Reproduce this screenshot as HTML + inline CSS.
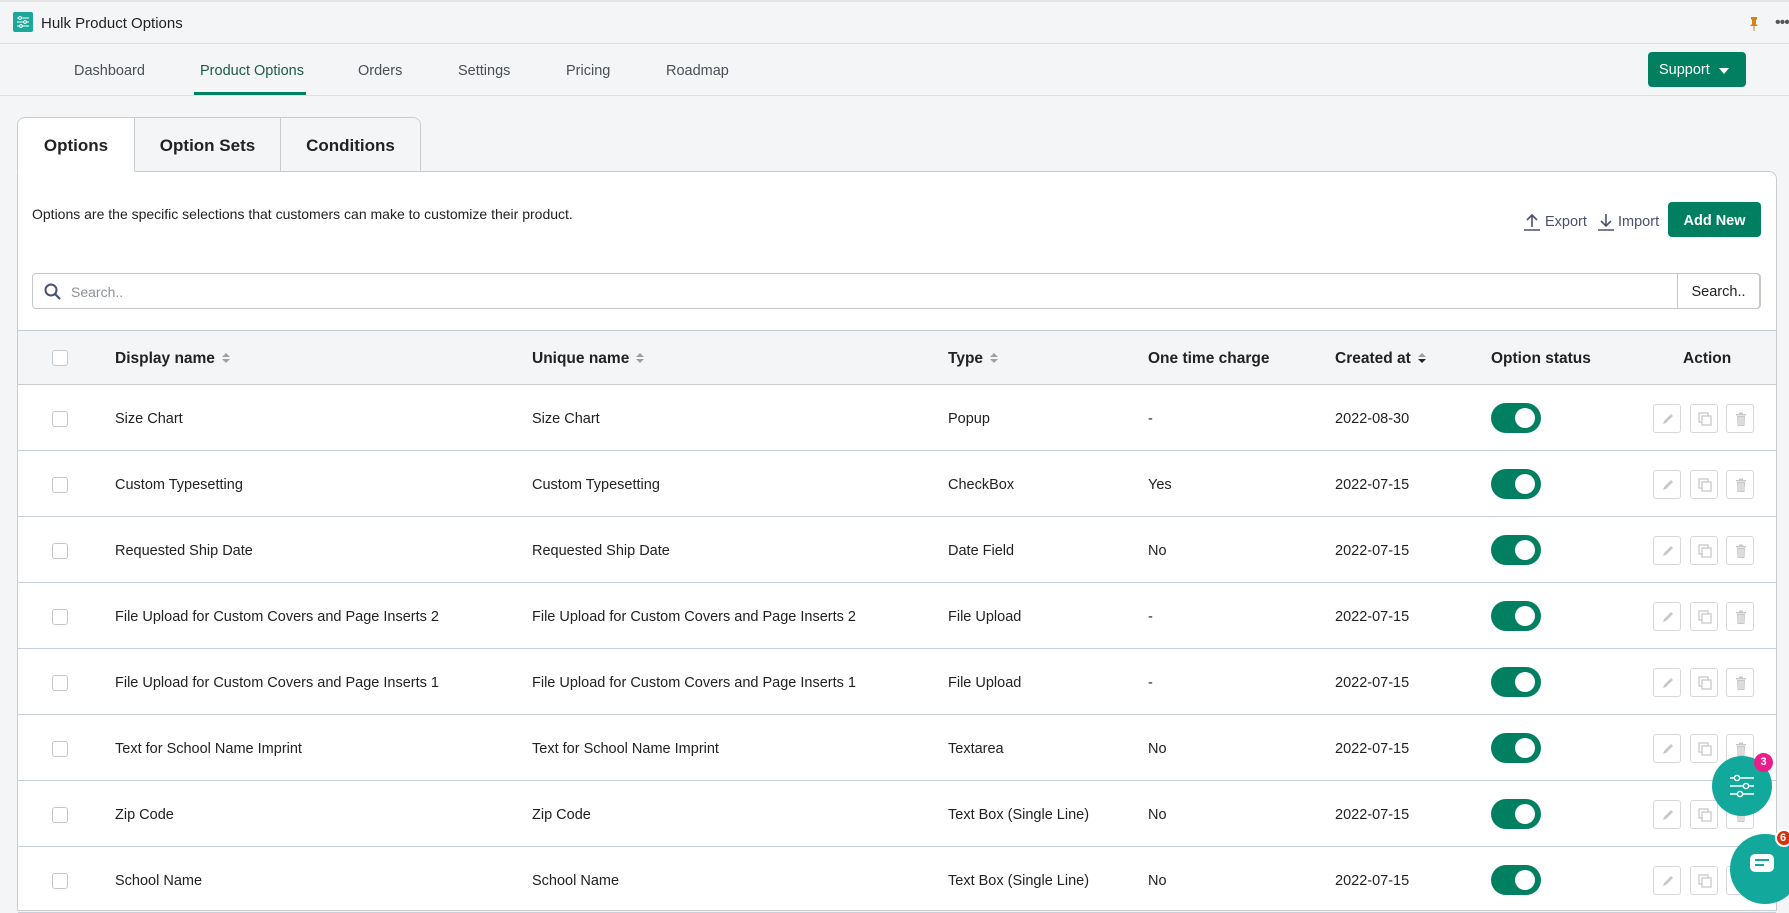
<!DOCTYPE html>
<html><head><meta charset="utf-8"><style>
*{box-sizing:border-box;margin:0;padding:0}
body{width:1789px;height:892px;overflow:hidden;background:#f4f5f7;font-family:"Liberation Sans",sans-serif;color:#202223;position:relative}
.top{position:absolute;left:0;top:0;width:1789px;height:44px;border-bottom:1px solid #dcdee1;border-top:2px solid #e3e3e3}
.logo{position:absolute;left:13px;top:10px;width:20px;height:20px;background:#1aa89c;border-radius:2px}
.title{position:absolute;left:41px;top:13px;font-size:15px;color:#202223}
.nav{position:absolute;left:0;top:44px;width:1789px;height:52px;border-bottom:1px solid #dcdee1}
.nav span{position:absolute;top:19px;font-size:14.5px;color:#4a4f55}
.nav .act{color:#1d5a49}
.ul{position:absolute;left:194px;top:48px;width:112px;height:3px;background:#008060}
.sup{position:absolute;left:1648px;top:52px;width:98px;height:35px;background:#008060;border-radius:4px;color:#fff;font-size:14.5px;line-height:37px;padding-left:11px}
.sup:after{content:"";position:absolute;right:17px;top:16px;border:5px solid transparent;border-top:6px solid #fff;border-bottom:0}
.tab{position:absolute;top:117px;height:55px;background:#f4f5f7;border:1px solid #c9cccf;font-weight:bold;font-size:17px;text-align:center;line-height:56px;color:#202223}
.card{position:absolute;left:17px;top:171px;width:1760px;height:740px;background:#fff;border:1px solid #c9cccf;border-radius:0 8px 0 0}
.desc{position:absolute;left:32px;top:206px;font-size:14px;color:#202223}
.lnk{position:absolute;top:214px;font-size:14.5px;color:#4a5070}
.add{position:absolute;left:1668px;top:202px;width:93px;height:35px;background:#008060;border-radius:4px;color:#fff;font-weight:bold;font-size:14.5px;text-align:center;line-height:38px}
.search{position:absolute;left:32px;top:273px;width:1729px;height:36px;border:1px solid #c4c8cc;border-radius:4px}
.search .ph{position:absolute;left:38px;top:10px;font-size:14px;color:#8c9196}
.search .btn{position:absolute;right:0;top:-1px;width:83px;height:36px;border:1px solid #c4c8cc;border-radius:0 4px 4px 0;font-size:14.5px;text-align:center;line-height:37px}
.th{position:absolute;left:18px;top:330px;width:1758px;height:55px;background:#f4f5f7;border-top:1px solid #c9cccf;border-bottom:1px solid #c9cccf}
.th span{position:absolute;top:19px;font-weight:bold;font-size:15.5px;color:#202223}
.srt{display:inline-block;width:8px;height:12px;margin-left:7px;vertical-align:-1px;position:relative}
.srt:before,.srt:after{content:"";position:absolute;left:0;border:4px solid transparent}
.srt:before{top:-3px;border-bottom:4px solid #9ba0a5}
.srt:after{top:7px;border-top:4px solid #9ba0a5}
.srt.d:after{border-top-color:#202223}
.row{position:absolute;left:18px;width:1758px;height:66px;border-bottom:1px solid #c9cfd8}
.row span{position:absolute;top:26px;font-size:14.5px;color:#202223}
.cb{position:absolute;width:16px;height:16px;border:1px solid #c4c8cc;border-radius:3px;background:#fff}
.tg{position:absolute;left:1473px;top:18px;width:50px;height:30px;border-radius:15px;background:#008060}
.tg:after{content:"";position:absolute;right:6px;top:5px;width:20px;height:20px;border-radius:50%;background:#fff}
.ab{position:absolute;top:19px;width:28px;height:29px;border:1px solid #d5d7da;border-radius:3px;background:#fff}
.ab svg{position:absolute;left:6px;top:6px}
</style></head><body>
<div class="top"><div class="logo"><svg width="20" height="20" viewBox="0 0 20 20"><g stroke="#fff" stroke-width="1" fill="none"><path d="M4 6h12M4 10h12M4 14h12"/><circle cx="7" cy="6" r="1.4" fill="#1aa89c"/><circle cx="12" cy="10" r="1.4" fill="#1aa89c"/><circle cx="8" cy="14" r="1.4" fill="#1aa89c"/></g></svg></div><div class="title">Hulk Product Options</div>
<svg style="position:absolute;left:1748px;top:14px" width="12" height="16" viewBox="0 0 12 16"><path d="M3 1h6v2l-1 1v4l2 2H2l2-2V4L3 3z M5.5 10h1v5h-1z" fill="#d4801b"/></svg>
<div style="position:absolute;left:1775px;top:12px;font-size:16px;color:#555;letter-spacing:-1px">•••</div></div>
<div class="nav"><span style="left:74px">Dashboard</span><span class="act" style="left:200px">Product Options</span><span style="left:358px">Orders</span><span style="left:458px">Settings</span><span style="left:566px">Pricing</span><span style="left:666px">Roadmap</span><div class="ul"></div></div>
<div class="sup">Support</div>
<div class="card"></div>
<div class="tab" style="left:17px;width:118px;background:#fff;border-bottom-color:#fff;border-radius:8px 0 0 0;z-index:2">Options</div>
<div class="tab" style="left:134px;width:147px">Option Sets</div>
<div class="tab" style="left:280px;width:141px;border-radius:0 8px 0 0">Conditions</div>
<div class="desc">Options are the specific selections that customers can make to customize their product.</div>
<svg style="position:absolute;left:1524px;top:213px" width="16" height="18" viewBox="0 0 16 18"><path d="M8 14V2M3 7l5-5 5 5M0 17h16" stroke="#4a5070" stroke-width="1.6" fill="none"/></svg>
<div class="lnk" style="left:1545px">Export</div>
<svg style="position:absolute;left:1598px;top:213px" width="16" height="18" viewBox="0 0 16 18"><path d="M8 1v12M3 8l5 5 5-5M0 17h16" stroke="#4a5070" stroke-width="1.6" fill="none"/></svg>
<div class="lnk" style="left:1618px">Import</div>
<div class="add">Add New</div>
<div class="search"><svg style="position:absolute;left:11px;top:9px" width="18" height="18" viewBox="0 0 18 18"><circle cx="7" cy="7" r="5.5" stroke="#4a5070" stroke-width="2" fill="none"/><path d="M11 11l5 5" stroke="#4a5070" stroke-width="2.2"/></svg><span class="ph">Search..</span><div class="btn">Search..</div></div>
<div class="th"><div class="cb" style="left:34px;top:19px"></div>
<span style="left:97px">Display name<i class="srt"></i></span>
<span style="left:514px">Unique name<i class="srt"></i></span>
<span style="left:930px">Type<i class="srt"></i></span>
<span style="left:1130px">One time charge</span>
<span style="left:1317px">Created at<i class="srt d"></i></span>
<span style="left:1473px">Option status</span>
<span style="left:1665px">Action</span></div>
<div id="rows"></div>
<script>
var d=[["Size Chart","Popup","-","2022-08-30"],["Custom Typesetting","CheckBox","Yes","2022-07-15"],["Requested Ship Date","Date Field","No","2022-07-15"],["File Upload for Custom Covers and Page Inserts 2","File Upload","-","2022-07-15"],["File Upload for Custom Covers and Page Inserts 1","File Upload","-","2022-07-15"],["Text for School Name Imprint","Textarea","No","2022-07-15"],["Zip Code","Text Box (Single Line)","No","2022-07-15"],["School Name","Text Box (Single Line)","No","2022-07-15"]];
var pen='<svg width="16" height="16" viewBox="0 0 16 16"><path d="M3 13l1-3 7-7 2 2-7 7z" fill="#c8c8c8"/></svg>';
var cp='<svg width="16" height="16" viewBox="0 0 16 16"><rect x="2" y="2" width="9" height="9" fill="none" stroke="#c8c8c8" stroke-width="1.3"/><rect x="5" y="5" width="9" height="9" fill="#fff" stroke="#c8c8c8" stroke-width="1.3"/></svg>';
var tr='<svg width="16" height="16" viewBox="0 0 16 16"><path d="M3 3h10v1.5H3zM6 1.5h4V3H6zM4 5h8l-.5 10h-7z" fill="#c8c8c8"/><path d="M6 6v8M8 6v8M10 6v8" stroke="#fff" stroke-width=".7"/></svg>';
var h='';d.forEach(function(r,i){h+='<div class="row" style="top:'+(385+i*66)+'px"><div class="cb" style="left:34px;top:26px"></div><span style="left:97px">'+r[0]+'</span><span style="left:514px">'+r[0]+'</span><span style="left:930px">'+r[1]+'</span><span style="left:1130px">'+r[2]+'</span><span style="left:1317px">'+r[3]+'</span><div class="tg"></div><div class="ab" style="left:1635px">'+pen+'</div><div class="ab" style="left:1672px">'+cp+'</div><div class="ab" style="left:1708px">'+tr+'</div></div>'});
document.getElementById('rows').innerHTML=h;
</script>
<div style="position:absolute;left:1712px;top:756px;width:60px;height:60px;border-radius:50%;background:#12a89c"><svg style="position:absolute;left:16px;top:16px" width="28" height="28" viewBox="0 0 28 28"><g stroke="#fff" stroke-width="1.4" fill="#12a89c"><path d="M2 6h24M2 14h24M2 22h24"/><circle cx="9" cy="6" r="2.6"/><circle cx="18" cy="14" r="2.6"/><circle cx="12" cy="22" r="2.6"/></g></svg></div>
<div style="position:absolute;left:1754px;top:753px;width:19px;height:19px;border-radius:50%;background:#e91e8c;color:#fff;font-size:11px;font-weight:bold;text-align:center;line-height:19px">3</div>
<div style="position:absolute;left:1730px;top:834px;width:70px;height:70px;border-radius:50%;background:#12a89c"><div style="position:absolute;left:20px;top:20px;width:24px;height:18px;background:#fff;border-radius:5px"><div style="position:absolute;left:5px;top:5px;width:14px;height:2px;background:#12a89c"></div><div style="position:absolute;left:5px;top:10px;width:9px;height:2px;background:#12a89c"></div></div></div>
<div style="position:absolute;left:1775px;top:829px;width:18px;height:18px;border-radius:50%;background:#d6330a;border:2px solid #fff;color:#fff;font-size:11px;font-weight:bold;line-height:15px;padding-left:3px">6</div>
</body></html>
